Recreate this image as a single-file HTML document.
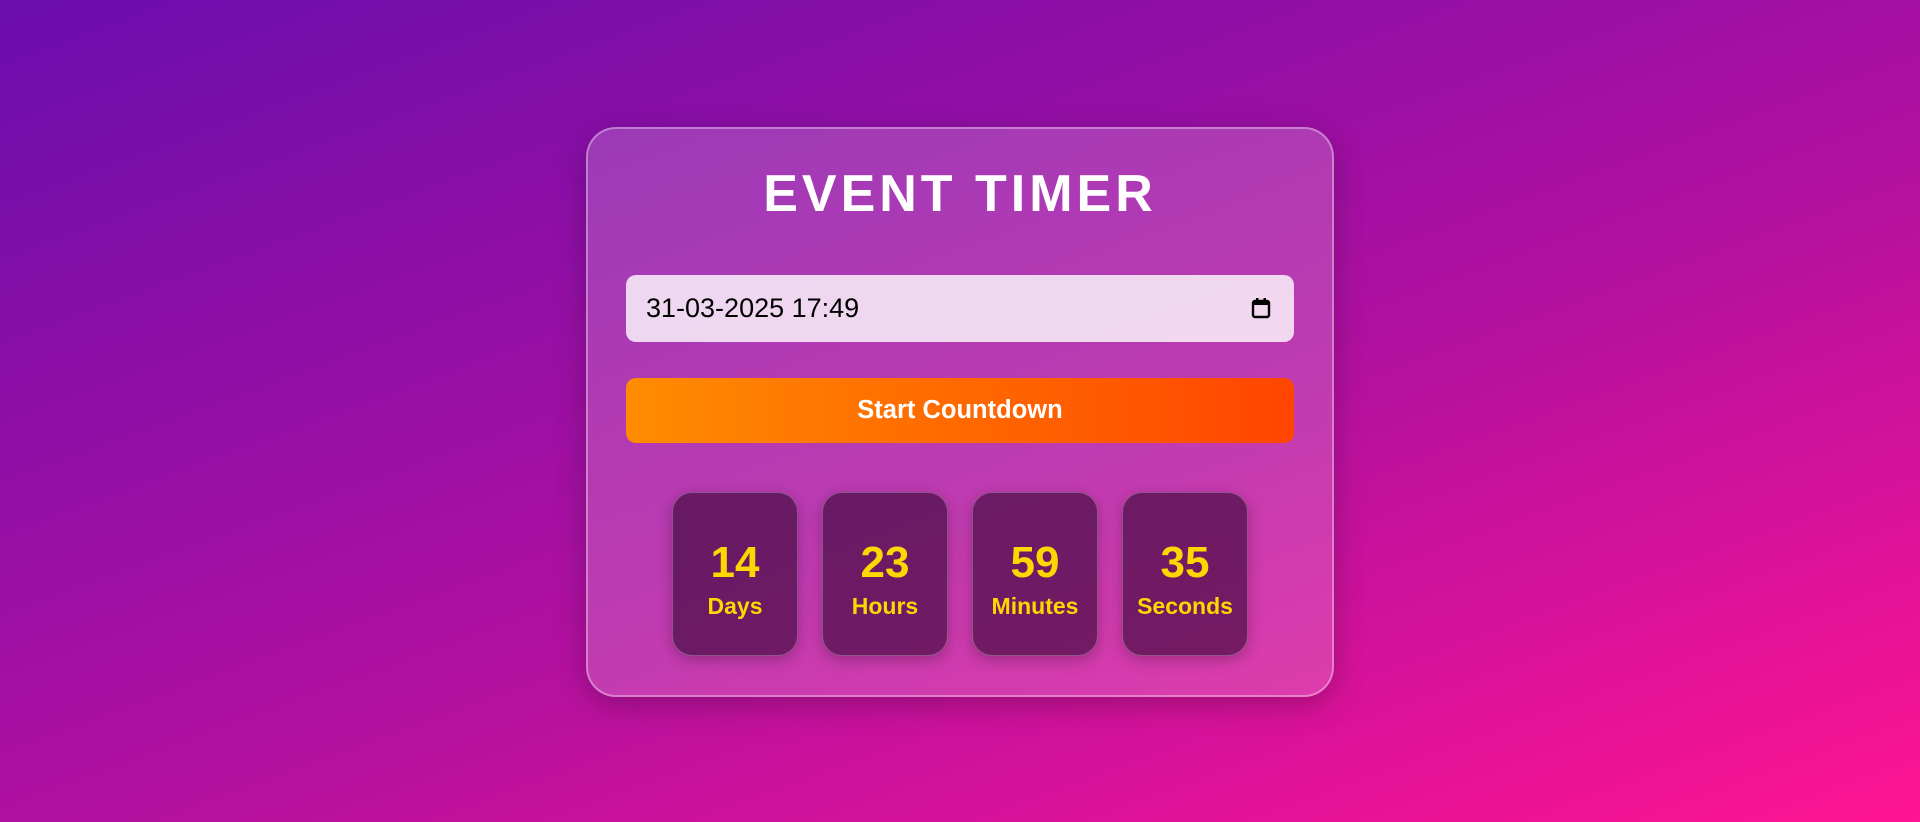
<!DOCTYPE html>
<html><head><meta charset="utf-8"><style>
*{box-sizing:border-box;margin:0;padding:0}
html,body{width:1920px;height:822px;overflow:hidden}
body{background:linear-gradient(160deg,#6a0dad 0%,#b010a0 55%,#ff1493 100%);font-family:"Liberation Sans",Arial,sans-serif;position:relative}
.card{position:absolute;left:586px;top:127px;width:748px;height:570px;border-radius:30px;border:2px solid rgba(255,255,255,0.35);background:rgba(255,255,255,0.18);box-shadow:0 8px 30px rgba(0,0,0,0.25)}
h1{position:absolute;left:0;right:0;top:164px;text-align:center;color:#fff;font-size:52px;font-weight:bold;letter-spacing:4px;line-height:60px}
.input{position:absolute;left:626px;top:275px;width:668px;height:67px;border-radius:10px;background:rgba(255,255,255,0.8);color:#000;font-size:27px;line-height:67px;padding-left:20px}
.input svg{position:absolute;left:625px;top:22px}
.btn{position:absolute;left:626px;top:378px;width:668px;height:65px;border-radius:10px;background:linear-gradient(90deg,#ff8c00,#ff4500);color:#fff;font-weight:bold;font-size:25.5px;line-height:65px;text-align:center}
.box{position:absolute;top:492px;width:126px;height:164px;border-radius:20px;background:rgba(50,5,50,0.6);border:1px solid rgba(255,255,255,0.25);box-shadow:0 4px 14px rgba(0,0,0,0.25);color:#ffd700;font-weight:bold;text-align:center}
.n{position:absolute;left:0;right:0;top:48px;font-size:44px;line-height:44px}
.l{position:absolute;left:0;right:0;top:100px;font-size:23px;line-height:26px}
</style></head><body>
<div class="card"></div>
<h1>EVENT TIMER</h1>
<div class="input">31-03-2025 17:49<svg width="20" height="22" viewBox="0 0 20 22"><rect x="2" y="4" width="16" height="16" rx="2" fill="none" stroke="#000" stroke-width="2.4"/><rect x="2" y="4" width="16" height="4" fill="#000"/><rect x="5" y="1" width="2.5" height="4" fill="#000"/><rect x="12.5" y="1" width="2.5" height="4" fill="#000"/></svg></div>
<div class="btn">Start Countdown</div>
<div class="box" style="left:672px"><div class="n">14</div><div class="l">Days</div></div>
<div class="box" style="left:822px"><div class="n">23</div><div class="l">Hours</div></div>
<div class="box" style="left:972px"><div class="n">59</div><div class="l">Minutes</div></div>
<div class="box" style="left:1122px"><div class="n">35</div><div class="l">Seconds</div></div>
</body></html>
